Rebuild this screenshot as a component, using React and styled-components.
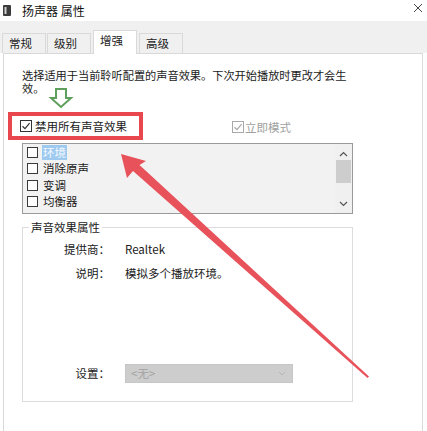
import styled, { createGlobalStyle } from "styled-components";

const GlobalStyle = createGlobalStyle`
  html, body {
    margin: 0;
    padding: 0;
    background: #fff;
  }
  body {
    font-family: "Noto Sans CJK SC", "Noto Sans", sans-serif;
    font-size: 11.5px;
    color: #1a1a1a;
  }
`;

const effects = ["环境", "消除原声", "变调", "均衡器", "响度均衡"];

const CheckIcon = ({ checked, color = "#333" }) => (
  <svg width="12" height="12" viewBox="0 0 12 12">
    <rect x="0.5" y="0.5" width="11" height="11" fill="#fff" stroke={color} />
    {checked && (
      <path d="M2.5 6.2 L5 8.6 L9.6 3.2" fill="none" stroke={color} strokeWidth="1.2" />
    )}
  </svg>
);

const App = () => {
  return (
    <Window>
      <GlobalStyle />
      <TitleBar>
        <svg width="8" height="11" viewBox="0 0 8 11">
          <rect x="0" y="0" width="8" height="11" rx="1" fill="#3c3c3c" />
          <rect x="1.5" y="2" width="2" height="7" fill="#cfcfcf" />
        </svg>
        <Title>扬声器 属性</Title>
        <Close>
          <svg width="10" height="10" viewBox="0 0 10 10">
            <path d="M1 1 L9 9 M9 1 L1 9" stroke="#444" strokeWidth="1" />
          </svg>
        </Close>
      </TitleBar>

      <TabStrip>
        <Tab>常规</Tab>
        <Tab>级别</Tab>
        <Tab $active>增强</Tab>
        <Tab>高级</Tab>
      </TabStrip>

      <Panel>
        <Description>
          选择适用于当前聆听配置的声音效果。下次开始播放时更改才会生
          <br />
          效。
        </Description>

        <OptionRow>
          <Highlight>
            <CheckIcon checked />
            <span>禁用所有声音效果</span>
          </Highlight>
          <Immediate>
            <CheckIcon checked color="#a8a8a8" />
            <span>立即模式</span>
          </Immediate>
        </OptionRow>

        <ListBox>
          <Items>
            {effects.map((name, i) => (
              <Item key={name}>
                <Box />
                <ItemLabel $selected={i === 0}>{name}</ItemLabel>
              </Item>
            ))}
          </Items>
          <ScrollBar>
            <svg width="9" height="6" viewBox="0 0 9 6">
              <path d="M1 5 L4.5 1.5 L8 5" fill="none" stroke="#555" strokeWidth="1.2" />
            </svg>
            <Thumb />
            <ScrollSpace />
            <svg width="9" height="6" viewBox="0 0 9 6">
              <path d="M1 1 L4.5 4.5 L8 1" fill="none" stroke="#555" strokeWidth="1.2" />
            </svg>
          </ScrollBar>
        </ListBox>

        <GroupBox>
          <Legend>声音效果属性</Legend>
          <PropRow $first>
            <PropLabel>提供商：</PropLabel>
            <span>Realtek</span>
          </PropRow>
          <PropRow>
            <PropLabel>说明：</PropLabel>
            <span>模拟多个播放环境。</span>
          </PropRow>
          <Grow />
          <PropRow>
            <PropLabel>设置：</PropLabel>
            <Select>
              <span>&lt;无&gt;</span>
              <svg width="8" height="5" viewBox="0 0 8 5">
                <path d="M1 1 L4 4 L7 1" fill="none" stroke="#b5b5b5" strokeWidth="1" />
              </svg>
            </Select>
          </PropRow>
        </GroupBox>
      </Panel>

      <Annotations width="427" height="431" viewBox="0 0 427 431">
        <path
          d="M56 89 L66 89 L66 98 L71 98 L61 107 L51 98 L56 98 Z"
          fill="#fff"
          stroke="#5f9f5c"
          strokeWidth="2"
          strokeLinejoin="miter"
        />
        <path
          d="M121 154 L146 161 L139.5 165 L369 376.5 L367.5 378 L133 171 L127 178 Z"
          fill="#e8525a"
        />
      </Annotations>
    </Window>
  );
};

const Window = styled.div`
  position: relative;
  width: 427px;
  height: 431px;
  overflow: hidden;
  background: #fff;
  display: flex;
  flex-direction: column;
`;

const TitleBar = styled.div`
  height: 21px;
  display: flex;
  align-items: center;
  padding-left: 3px;
  flex-shrink: 0;
`;

const Title = styled.span`
  margin-left: 11px;
  font-size: 12px;
  line-height: 14px;
  color: #111;
`;

const Close = styled.span`
  margin-left: auto;
  margin-right: 4px;
  display: flex;
  margin-top: -6px;
`;

const TabStrip = styled.div`
  height: 32px;
  flex-shrink: 0;
  background: #f0f0f0;
  display: flex;
  align-items: flex-end;
  gap: 1px;
  padding-left: 2px;
  position: relative;
  z-index: 1;
`;

const Tab = styled.div`
  width: 44px;
  box-sizing: border-box;
  height: ${(p) => (p.$active ? "24px" : "20px")};
  margin: ${(p) => (p.$active ? "0 1px -1px 1px" : "0")};
  padding-left: 6px;
  border: 1px solid #d9d9d9;
  border-bottom: none;
  background: ${(p) => (p.$active ? "#fff" : "#f0f0f0")};
  color: #222;
  line-height: ${(p) => (p.$active ? "19px" : "18px")};
`;

const Panel = styled.div`
  flex: 1;
  margin: 0 4px 0 3px;
  border: 1px solid #d9d9d9;
  border-bottom: none;
  padding: 15px 0 0 18px;
  display: flex;
  flex-direction: column;
`;

const Description = styled.div`
  font-size: 11.2px;
  line-height: 13px;
  white-space: nowrap;
  color: #1a1a1a;
`;

const OptionRow = styled.div`
  margin-top: 17px;
  display: flex;
  align-items: center;
`;

const Highlight = styled.div`
  margin-left: -14px;
  width: 135px;
  height: 28px;
  box-sizing: border-box;
  border: 4px solid #e8474d;
  display: flex;
  align-items: center;
  gap: 3px;
  padding-left: 8px;
  line-height: 14px;
`;

const Immediate = styled.div`
  margin-left: 89px;
  margin-top: 2px;
  display: flex;
  align-items: center;
  gap: 1px;
  color: #a0a0a0;
  line-height: 14px;
`;

const ListBox = styled.div`
  margin-top: 3px;
  width: 331px;
  height: 71px;
  flex-shrink: 0;
  box-sizing: border-box;
  border: 1px solid #9a9a9a;
  background: #f2f2f2;
  display: flex;
`;

const Items = styled.div`
  flex: 1;
  overflow: hidden;
`;

const Item = styled.div`
  height: 16.5px;
  display: flex;
  align-items: center;
  padding-left: 4px;
`;

const Box = styled.span`
  width: 11px;
  height: 11px;
  box-sizing: border-box;
  border: 1px solid #3a3a3a;
  background: #fff;
  margin-right: 5px;
`;

const ItemLabel = styled.span`
  line-height: 15px;
  padding: 0 1px;
  margin-left: -1px;
  background: ${(p) => (p.$selected ? "#9fcaef" : "transparent")};
  color: ${(p) => (p.$selected ? "#f4f9ff" : "#1a1a1a")};
`;

const ScrollBar = styled.div`
  width: 17px;
  background: #f0f0f0;
  display: flex;
  flex-direction: column;
  align-items: center;
  padding: 7px 0 6px;
  box-sizing: border-box;
`;

const Thumb = styled.div`
  width: 15px;
  height: 23px;
  margin-top: 3px;
  background: #cdcdcd;
`;

const ScrollSpace = styled.div`
  flex: 1;
`;

const GroupBox = styled.div`
  margin-top: 13px;
  width: 331px;
  height: 175px;
  flex-shrink: 0;
  box-sizing: border-box;
  border: 1px solid #dcdcdc;
  padding-bottom: 16px;
  display: flex;
  flex-direction: column;
`;

const Legend = styled.div`
  align-self: flex-start;
  margin: -7px 0 0 6px;
  padding: 0 2px;
  background: #fff;
  line-height: 13px;
  color: #1a1a1a;
`;

const PropRow = styled.div`
  display: grid;
  grid-template-columns: 87px 1fr;
  column-gap: 15px;
  align-items: center;
  min-height: 24px;
  line-height: 14px;
  margin-top: ${(p) => (p.$first ? "3px" : "0")};
`;

const PropLabel = styled.span`
  text-align: right;
  color: #1a1a1a;
`;

const Grow = styled.div`
  flex: 1;
`;

const Select = styled.div`
  width: 168px;
  height: 19px;
  box-sizing: border-box;
  background: #cdcdcd;
  border: 1px solid #c6c6c6;
  color: #a2a2a2;
  display: flex;
  align-items: center;
  justify-content: space-between;
  padding: 0 6px 0 5px;
`;

const Annotations = styled.svg`
  position: absolute;
  left: 0;
  top: 0;
  pointer-events: none;
  z-index: 2;
`;

export default App;
